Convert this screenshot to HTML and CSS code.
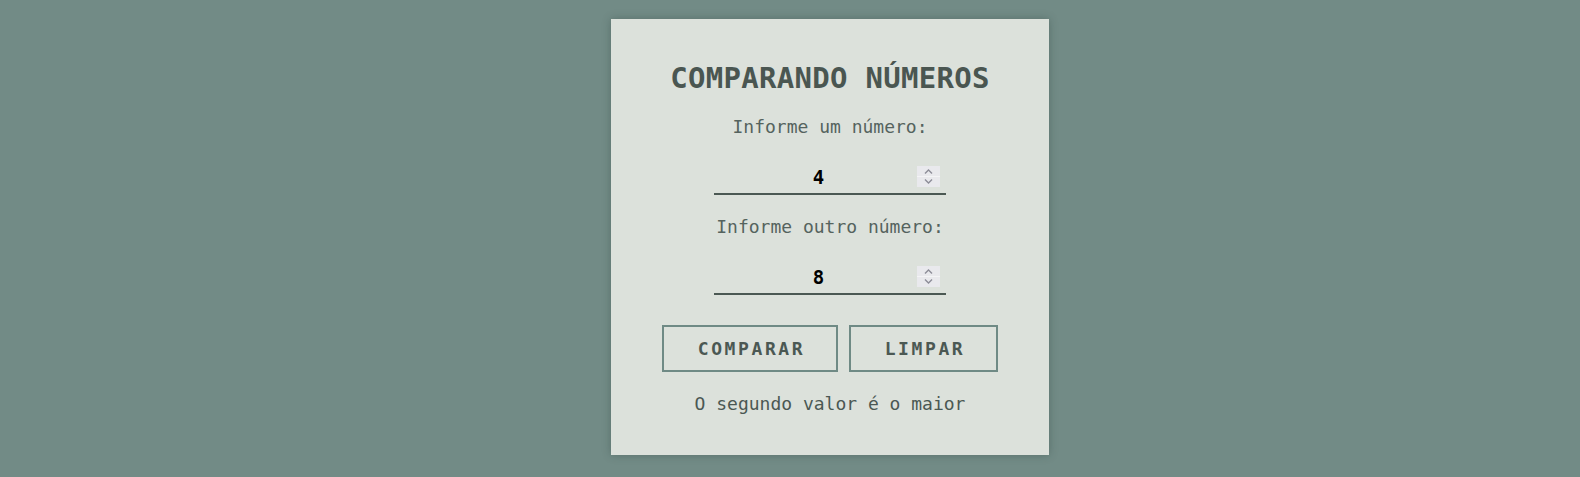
FILE: index.html
```html
<!DOCTYPE html>
<html lang="pt-br">
<head>
<meta charset="utf-8">
<title>Comparando números</title>
<link rel="stylesheet" href="styles.css">
</head>
<body>
<main class="card">
  <h1 class="title">COMPARANDO NÚMEROS</h1>
  <form class="form">
    <label class="label" for="n1">Informe um número:</label>
    <span class="field-wrap">
      <input class="field" id="n1" type="number" value="4">
      <span class="spin" aria-hidden="true">
        <svg class="chev" width="23" height="21" viewBox="0 0 23 21">
          <line x1="0" y1="10.5" x2="23" y2="10.5" stroke="#f4f4f6" stroke-width="1"/>
          <polyline points="8,7.5 11.5,4 15,7.5" fill="none" stroke="#8d8d98" stroke-width="1.4"/>
          <polyline points="8,13.5 11.5,17 15,13.5" fill="none" stroke="#8d8d98" stroke-width="1.4"/>
        </svg>
      </span>
    </span>
    <label class="label label-second" for="n2">Informe outro número:</label>
    <span class="field-wrap">
      <input class="field" id="n2" type="number" value="8">
      <span class="spin" aria-hidden="true">
        <svg class="chev" width="23" height="21" viewBox="0 0 23 21">
          <line x1="0" y1="10.5" x2="23" y2="10.5" stroke="#f4f4f6" stroke-width="1"/>
          <polyline points="8,7.5 11.5,4 15,7.5" fill="none" stroke="#8d8d98" stroke-width="1.4"/>
          <polyline points="8,13.5 11.5,17 15,13.5" fill="none" stroke="#8d8d98" stroke-width="1.4"/>
        </svg>
      </span>
    </span>
    <div class="actions">
      <button type="button" class="btn btn-compare">COMPARAR</button>
      <button type="reset" class="btn btn-clear">LIMPAR</button>
    </div>
  </form>
  <p class="result">O segundo valor é o maior</p>
</main>
</body>
</html>
```

FILE: styles.css
```css
html, body {
  margin: 0;
  padding: 0;
}
body {
  background: #728b86;
  font-family: "DejaVu Sans Mono", "Liberation Mono", monospace;
  color: #4b5853;
  padding: 19px 0 0 80px;
  height: 477px;
  box-sizing: border-box;
  overflow: hidden;
}
.card {
  width: 438px;
  box-sizing: border-box;
  margin: 0 auto;
  background: #dce1db;
  box-shadow: 0 0 8px rgba(40, 60, 55, 0.35);
  padding: 42px 0 40px;
  display: flex;
  flex-direction: column;
  align-items: center;
}
.title {
  margin: 0;
  font-size: 29px;
  line-height: 34px;
  font-weight: bold;
  color: #4a5651;
  letter-spacing: 0.3px;
}
.form {
  display: flex;
  flex-direction: column;
  align-items: center;
  margin: 21px 0 0;
}
.label {
  font-size: 18px;
  line-height: 22px;
  color: #55635e;
}
.label-second {
  margin-top: 21px;
}
.field-wrap {
  position: relative;
  display: block;
  margin-top: 23px;
  width: 232px;
  height: 34px;
}
.field {
  display: block;
  width: 232px;
  height: 34px;
  box-sizing: border-box;
  padding: 0 29px 0 6px;
  margin: 0;
  border: none;
  border-bottom: 2px solid #4b5853;
  background: transparent;
  font-family: "DejaVu Sans Mono", "Liberation Mono", monospace;
  font-size: 19px;
  font-weight: bold;
  color: #000;
  text-align: center;
  outline: none;
  -moz-appearance: textfield;
}
.field::-webkit-inner-spin-button,
.field::-webkit-outer-spin-button {
  -webkit-appearance: none;
  margin: 0;
}
.spin {
  position: absolute;
  right: 6px;
  top: 5px;
  width: 23px;
  height: 21px;
  background: #e9e9ed;
  pointer-events: none;
}
.chev {
  display: block;
}
.actions {
  display: flex;
  gap: 11px;
  margin-top: 30px;
}
.btn {
  height: 47px;
  box-sizing: border-box;
  border: 2px solid #6f8a85;
  background: transparent;
  font-family: "DejaVu Sans Mono", "Liberation Mono", monospace;
  font-size: 18px;
  font-weight: bold;
  letter-spacing: 2.6px;
  color: #4b5853;
  padding: 0 0 0 3px;
  cursor: pointer;
}
.btn-compare {
  width: 176px;
}
.btn-clear {
  width: 149px;
}
.result {
  margin: 21px 0 0;
  font-size: 18px;
  line-height: 22px;
  color: #4b5853;
}
```
